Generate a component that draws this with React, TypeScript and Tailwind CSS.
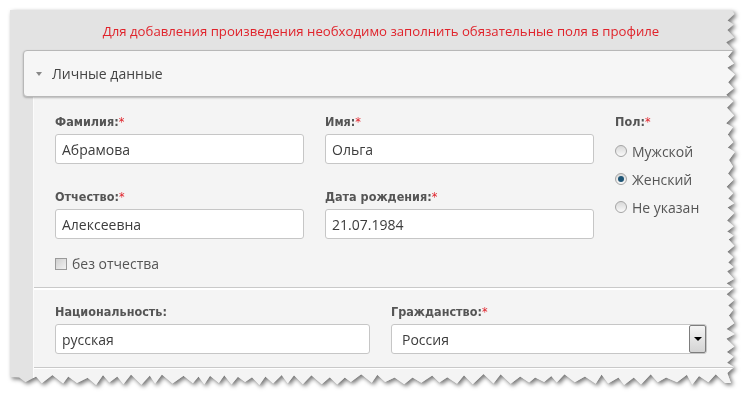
import React from "react";

const W = 725;
const H = 375;

// deterministic jitter for the torn paper edge
function rnd(i: number) {
    const x = Math.sin(i * 12.9898 + 78.233) * 43758.5453;
    return x - Math.floor(x);
}

function tornPath() {
    const pts: string[] = ["0px 0px", `${W - 3}px 0px`];
    let y = 4;
    let i = 0;
    while (y < H - 10) {
        const out = i % 2 === 0;
        const x = out ? W - rnd(i) * 2 : W - 6 - rnd(i + 50) * 3;
        pts.push(`${x.toFixed(1)}px ${y.toFixed(1)}px`);
        y += 4 + rnd(i + 100) * 4;
        i++;
    }
    pts.push(`${W - 4}px ${H - 2}px`);
    let x = W - 10;
    let j = 0;
    while (x > 4) {
        const out = j % 2 === 0;
        const yy = out ? H - rnd(j + 200) * 3 : H - 7 - rnd(j + 300) * 4;
        pts.push(`${x.toFixed(1)}px ${yy.toFixed(1)}px`);
        x -= 5 + rnd(j + 400) * 6;
        j++;
    }
    pts.push(`0px ${H - 8}px`);
    return `polygon(${pts.join(",")})`;
}

function Label({ text, required }: { text: string; required?: boolean }) {
    return (
        <div className="text-[12.5px] leading-[16px] font-bold text-[#555] font-['DejaVu_Sans_Condensed','DejaVu_Sans',sans-serif]">
            {text}
            {required && <span className="text-[#e0232b] font-normal">*</span>}
        </div>
    );
}

function TextInput({ value }: { value: string }) {
    return (
        <div className="mt-[4px] h-[30px] bg-white border border-[#c6c6c6] rounded-[3px] px-[6px] flex items-center text-[14px] text-[#3c3c3c]">
            {value}
        </div>
    );
}

function Radio({ label, checked }: { label: string; checked?: boolean }) {
    return (
        <div className="flex items-center h-[28px] gap-[5px] text-[14px] text-[#555]">
            <span className="w-[12px] h-[12px] rounded-full border border-[#a4a4a4] bg-gradient-to-b from-[#d8d8d8] to-[#fafafa] flex items-center justify-center">
                {checked && <span className="w-[6px] h-[6px] rounded-full bg-[#1d5475]" />}
            </span>
            {label}
        </div>
    );
}

export default function App() {
    const clip = tornPath();
    return (
        <div className="w-[753px] h-[405px] bg-white overflow-hidden font-['Open_Sans',sans-serif]">
            <div className="ml-[10px] pt-[10px] w-[740px] drop-shadow-[2px_2px_2px_rgba(0,0,0,0.55)]">
                <div className="bg-[#e3e3e3] h-[375px] overflow-hidden" style={{ clipPath: clip }}>
                    <div className="h-[40px] flex items-center justify-center text-[13.2px] text-[#e0232b] pl-[2px] pt-[4px]">
                        Для добавления произведения необходимо заполнить обязательные поля в профиле
                    </div>
                    <div className="pl-[13px]">
                        <div className="h-[47px] bg-[#f6f6f6] border border-[#b8b8b8] rounded-l-[4px] shadow-[0_1px_2px_rgba(0,0,0,0.25)] flex items-center pl-[12px] gap-[10px] text-[14px] text-[#444] relative z-10">
                            <span className="w-0 h-0 border-l-[3.5px] border-r-[3.5px] border-t-[4px] border-l-transparent border-r-transparent border-t-[#888]" />
                            Личные данные
                        </div>
                        <div className="ml-[10px] bg-[#f4f4f4] border-l border-[#fbfbfb]">
                            <div className="h-[190px] pl-[21px] pt-[17px] flex">
                                <div className="w-[249px]">
                                    <Label text="Фамилия:" required />
                                    <TextInput value="Абрамова" />
                                    <div className="mt-[25px]">
                                        <Label text="Отчество:" required />
                                        <TextInput value="Алексеевна" />
                                    </div>
                                    <div className="mt-[14px] flex items-center gap-[5px] text-[14px] text-[#555]">
                                        <span className="w-[12px] h-[12px] border border-[#9a9a9a] bg-gradient-to-br from-[#cfcfcf] to-[#f2f2f2]" />
                                        без отчества
                                    </div>
                                </div>
                                <div className="w-[269px] ml-[21px]">
                                    <Label text="Имя:" required />
                                    <TextInput value="Ольга" />
                                    <div className="mt-[25px]">
                                        <Label text="Дата рождения:" required />
                                        <TextInput value="21.07.1984" />
                                    </div>
                                </div>
                                <div className="ml-[21px]">
                                    <Label text="Пол:" required />
                                    <div className="mt-[7px]">
                                        <Radio label="Мужской" />
                                        <Radio label="Женский" checked />
                                        <Radio label="Не указан" />
                                    </div>
                                </div>
                            </div>
                            <div className="border-t border-[#c9c9c9] border-b-2 border-b-white" />
                            <div className="h-[78px] pl-[21px] pt-[14px] flex border-b border-[#c9c9c9]">
                                <div className="w-[315px]">
                                    <Label text="Национальность:" />
                                    <TextInput value="русская" />
                                </div>
                                <div className="w-[316px] ml-[21px]">
                                    <Label text="Гражданство:" required />
                                    <div className="mt-[4px] h-[30px] bg-white border border-[#c6c6c6] rounded-[3px] flex items-center text-[14px] text-[#3c3c3c]">
                                        <span className="flex-1 pl-[10px]">Россия</span>
                                        <span className="w-[17px] h-[28px] border border-[#7d7d7d] rounded-[2px] bg-gradient-to-b from-[#f4f4f4] to-[#d4d4d4] flex items-center justify-center">
                                            <span className="w-0 h-0 border-l-[4px] border-r-[4px] border-t-[4px] border-l-transparent border-r-transparent border-t-black" />
                                        </span>
                                    </div>
                                </div>
                            </div>
                            <div className="h-[20px] border-t border-white" />
                        </div>
                    </div>
                </div>
            </div>
        </div>
    );
}
